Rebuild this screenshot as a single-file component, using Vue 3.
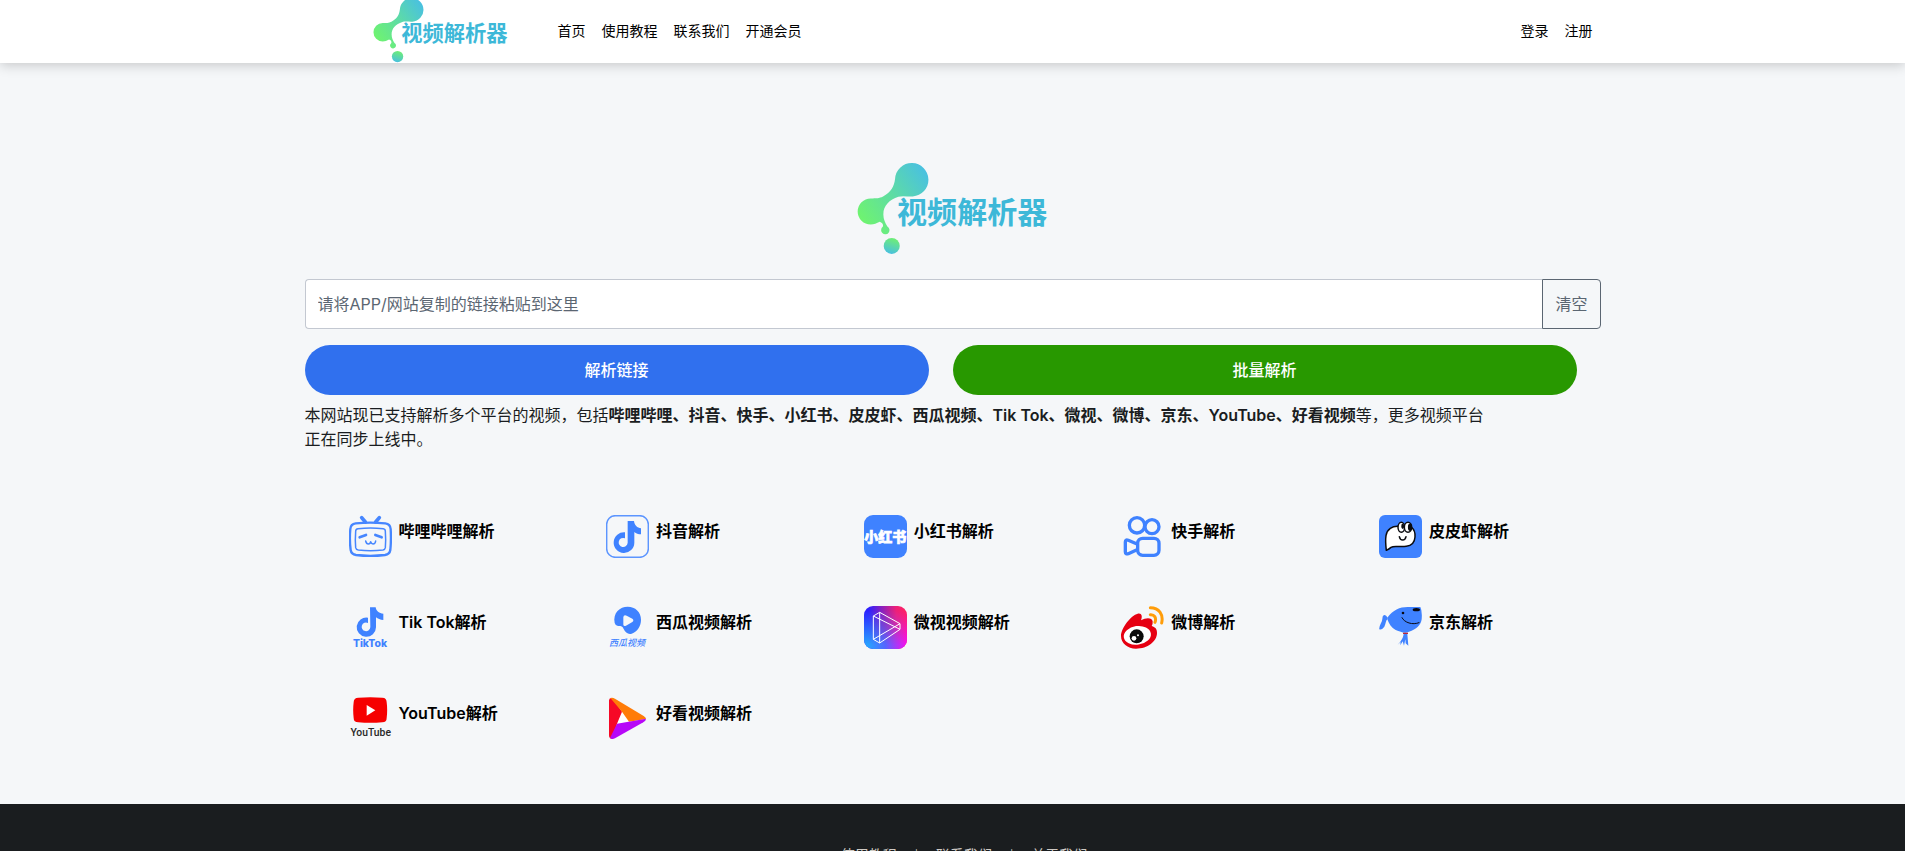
<script setup>
import { ref } from 'vue'

const link = ref('')

const mainNav = ['首页', '使用教程', '联系我们', '开通会员']
const userNav = ['登录', '注册']
const footerNav = ['使用教程', '联系我们', '关于我们']

const platforms = [
  { id: 'bilibili', label: '哔哩哔哩解析' },
  { id: 'douyin', label: '抖音解析' },
  { id: 'xiaohongshu', label: '小红书解析' },
  { id: 'kuaishou', label: '快手解析' },
  { id: 'pipixia', label: '皮皮虾解析' },
  { id: 'tiktok', label: 'Tik Tok解析' },
  { id: 'xigua', label: '西瓜视频解析' },
  { id: 'weishi', label: '微视视频解析' },
  { id: 'weibo', label: '微博解析' },
  { id: 'jd', label: '京东解析' },
  { id: 'youtube', label: 'YouTube解析' },
  { id: 'haokan', label: '好看视频解析' },
]
</script>

<template>
  <div class="page">
    <svg class="defs" width="0" height="0" aria-hidden="true">
      <defs>
        <linearGradient id="blobFill" x1="0" y1="0.8" x2="1" y2="0.1">
          <stop offset="0" stop-color="#70f56c" />
          <stop offset="0.5" stop-color="#5edca4" />
          <stop offset="1" stop-color="#48bfe4" />
        </linearGradient>
        <linearGradient id="ballFill" x1="0.7" y1="0" x2="0.4" y2="1">
          <stop offset="0" stop-color="#70f070" />
          <stop offset="1" stop-color="#48c0e0" />
        </linearGradient>
        <symbol id="brand" viewBox="54 41 572 275">
          <path
            fill="url(#blobFill)"
            d="M168 88 A50 50 0 1 1 221 141 C205 142 192 138 178 142 C150 151 132 170 133 196 C133 209 138 220 145 231 A12.500 12.500 0 1 1 131 232 C134 226 130 220 122 217 C113 222 105 225 95 225 A39 39 0 0 1 95 147 C112 146 120 147 132 141 C156 128 165 112 168 88Z"
          />
          <circle cx="158" cy="289" r="24" fill="url(#ballFill)" />
          <text x="174" y="221" class="brand-text">视频解析器</text>
        </symbol>
      </defs>
    </svg>

    <header class="header">
      <div class="container bar">
        <a href="#" class="brand-link" aria-label="视频解析器">
          <svg class="brand-small"><use href="#brand" /></svg>
        </a>
        <nav class="nav">
          <a v-for="item in mainNav" :key="item" href="#">{{ item }}</a>
        </nav>
        <nav class="nav user">
          <a v-for="item in userNav" :key="item" href="#">{{ item }}</a>
        </nav>
      </div>
    </header>

    <main class="container main">
      <svg class="brand-large" role="img" aria-label="视频解析器"><use href="#brand" /></svg>

      <form @submit.prevent>
        <div class="field">
          <input
            v-model="link"
            type="text"
            aria-label="视频链接"
            placeholder="请将APP/网站复制的链接粘贴到这里"
          />
          <button type="button" class="clear" @click="link = ''">清空</button>
        </div>
        <div class="actions">
          <button type="submit" class="action blue">解析链接</button>
          <button type="button" class="action green">批量解析</button>
        </div>
      </form>

      <p class="intro">
        本网站现已支持解析多个平台的视频，包括<strong>哔哩哔哩、抖音、快手、小红书、皮皮虾、西瓜视频、Tik Tok、微视、微博、京东、YouTube、好看视频</strong>等，更多视频平台正在同步上线中。
      </p>

      <div class="platforms">
        <a v-for="p in platforms" :key="p.id" href="#" class="platform">
          <svg class="icon" viewBox="0 0 129 129" aria-hidden="true">
            <g v-if="p.id === 'bilibili'" fill="none" stroke="#4686ff" stroke-linecap="round" stroke-linejoin="round">
              <path d="M38 8L49 21M91 8L80 21" stroke-width="11" />
              <path d="M20 25Q64 21 109 25Q124 27 125 42Q127 75 124 105Q122 118 108 120Q64 125 21 120Q7 118 5 105Q1 75 4 42Q5 27 20 25Z" stroke-width="7" />
              <path d="M27 41Q64 37 103 41Q109 42 109 49Q111 74 109 98Q108 104 102 105Q64 109 28 105Q21 104 20 98Q18 74 20 49Q20 42 27 41Z" stroke-width="4.500" />
              <path d="M32 67L51 60M79 60L98 67" stroke-width="8" />
              <path d="M50 78Q52 87 58 87Q64 87 65 80Q67 87 72 87Q79 87 80 78" stroke-width="4.500" />
            </g>

            <g v-else-if="p.id === 'douyin'">
              <rect x="2" y="2" width="125" height="125" rx="26" fill="none" stroke="#5c95ff" stroke-width="4.500" />
              <path fill="#3f82ff" d="M65 18H84C85 30 94 39 105 40V58C97 58 90 55 85 51V83A31 31 0 1 1 57 52V70A13.500 13.500 0 1 0 65 83Z" />
            </g>

            <g v-else-if="p.id === 'xiaohongshu'">
              <rect width="129" height="129" rx="27" fill="#3f82ff" />
              <text x="64" y="80" class="xhs">小红书</text>
            </g>

            <g v-else-if="p.id === 'kuaishou'" fill="none" stroke="#3f82ff" stroke-width="10" stroke-linejoin="round">
              <circle cx="48" cy="31" r="23" />
              <circle cx="93" cy="35" r="21" />
              <rect x="50" y="70" width="64" height="51" rx="15" />
              <path d="M48 87L22 76Q13 72 13 81V110Q13 119 22 116L48 104" />
            </g>

            <g v-else-if="p.id === 'pipixia'" stroke="#0b0c10" stroke-width="4.500" stroke-linejoin="round" stroke-linecap="round">
              <rect width="129" height="129" rx="18" fill="#3f82ff" stroke="none" />
              <path fill="#fff" d="M22 106C20 90 19 75 21 62C24 42 40 33 58 34L97 36C106 44 109 55 108 66C107 82 97 92 82 94C60 97 45 91 36 97Q30 102 22 106Z" />
              <ellipse cx="67" cy="37" rx="10" ry="15" fill="#fff" />
              <ellipse cx="87" cy="37" rx="11" ry="15" fill="#fff" />
              <ellipse cx="71" cy="34" rx="2" ry="6" fill="#0b0c10" />
              <ellipse cx="93" cy="37" rx="4" ry="9" fill="#0b0c10" />
              <path fill="none" d="M61 65Q63 75 71 75Q79 75 81 65" />
            </g>

            <g v-else-if="p.id === 'tiktok'" fill="#3f82ff">
              <path d="M63 4H80C81 14 91 23 103 23V42C94 42 86 38 81 34V64A29 29 0 1 1 57 35V51A13 13 0 1 0 64 63Z" />
              <text x="63" y="122" class="tt">TikTok</text>
            </g>

            <g v-else-if="p.id === 'xigua'" fill="#3f82ff">
              <path fill-rule="evenodd" d="M26 51C20 20 42 2 65 2C88 2 105 18 105 41C105 60 95 76 77 83C66 86 58 79 53 69C49 59 43 60 36 60Q28 59 26 51ZM52 34V56Q53 62 60 59L79 48Q85 43 79 38L62 29Q53 25 52 34Z" />
              <text x="63" y="121" class="xg">西瓜视频</text>
            </g>

            <g v-else-if="p.id === 'weishi'">
              <defs>
                <linearGradient id="wsTop" x1="0" x2="1">
                  <stop offset="0.1" stop-color="#2c20ff" />
                  <stop offset="0.75" stop-color="#ee2178" />
                  <stop offset="1" stop-color="#ff2260" />
                </linearGradient>
                <linearGradient id="wsBottom" x1="0" x2="1">
                  <stop offset="0.1" stop-color="#28a2ff" />
                  <stop offset="0.5" stop-color="#5566ff" />
                  <stop offset="1" stop-color="#fa0cf0" />
                </linearGradient>
                <linearGradient id="wsFade" x1="0" y1="0" x2="0" y2="1">
                  <stop offset="0.1" stop-color="#000" />
                  <stop offset="0.9" stop-color="#fff" />
                </linearGradient>
                <mask id="wsMask"><rect width="129" height="129" fill="url(#wsFade)" /></mask>
              </defs>
              <rect width="129" height="129" rx="27" fill="url(#wsTop)" />
              <rect width="129" height="129" rx="27" fill="url(#wsBottom)" mask="url(#wsMask)" />
              <path fill="none" stroke="#fff" stroke-width="3" stroke-linejoin="round" d="M47 19L28 30V100L47 111ZM47 19L108 53V70L47 111M28 30L108 70M28 100L108 53" />
            </g>

            <g v-else-if="p.id === 'weibo'">
              <path fill="#e60012" d="M0 90C0 66 30 28 50 23C62 20 65 30 60 43C75 34 93 34 95 46Q96 53 92 60C104 64 108 70 108 81C108 106 80 128 45 128C20 128 0 112 0 90Z" />
              <ellipse cx="49" cy="88" rx="41" ry="28" fill="#fff" transform="rotate(-8 49 88)" />
              <circle cx="47" cy="91" r="21" fill="#0a0a0a" />
              <circle cx="39" cy="97" r="7" fill="#fff" />
              <circle cx="51" cy="88" r="3" fill="#fff" />
              <path fill="none" stroke="#ff9d0a" stroke-width="9" stroke-linecap="round" d="M88 5C114 5 128 25 122 51M88 26C100 25 107 35 102 49" />
            </g>

            <g v-else-if="p.id === 'jd'">
              <path fill="#3f82ff" d="M25 35C42 12 62 3 86 3L124 3Q130 14 128 40C126 57 112 71 90 77C78 84 66 78 50 72C37 66 30 54 25 40Z" />
              <path fill="#3f82ff" d="M14 28Q20 25 26 35L25 40C20 44 21 53 16 62Q8 73 1 70C-1 60 10 48 10 39Q10 30 14 28Z" />
              <path fill="#3f82ff" d="M74 84H85L88 119L80 112L79 100L75 119L71 106L64 118L65 108L56 116Q72 101 74 84Z" />
              <path stroke="#b8263a" stroke-width="4" d="M72 82H87" />
              <ellipse cx="112" cy="11" rx="11" ry="5" fill="#0a0a14" />
              <circle cx="72" cy="21" r="4" fill="#0a0a14" />
              <path fill="none" stroke="#0a0a14" stroke-width="3" stroke-linecap="round" d="M69 35C76 50 101 58 120 50" />
            </g>

            <g v-else-if="p.id === 'youtube'">
              <path fill="#f60000" d="M28 2Q64 -1 100 2Q113 2 113 16Q116 39 113 63Q113 76 100 76Q64 79 28 76Q14 76 14 63Q11 39 14 16Q14 2 28 2Z" />
              <path fill="#fff" d="M53 24V56L79 40Z" />
              <text x="65" y="118" class="yt">YouTube</text>
            </g>

            <g v-else>
              <path fill="#fff" d="M47 40L30 82L74 75Z" />
              <path fill="#f60826" d="M9 10Q10 1 20 3L48 44L33 80L21 125Q9 127 9 115Z" />
              <path fill="#ff7c08" d="M13 3Q20 1 27 5L113 57Q120 61 120 66L69 74L48 44Z" />
              <path fill="#b708f8" d="M33 80L120 65Q120 71 112 76L27 124Q18 129 12 123Z" />
            </g>
          </svg>
          <span class="label">{{ p.label }}</span>
        </a>
      </div>
    </main>

    <footer class="footer">
      <nav class="footer-nav">
        <template v-for="(item, i) in footerNav" :key="item">
          <span v-if="i > 0" class="sep">|</span>
          <a href="#">{{ item }}</a>
        </template>
      </nav>
    </footer>
  </div>
</template>

<style>
body {
  margin: 0;
  background: #f5f7f9;
}
</style>

<style scoped>
.page {
  font-family: Inter, "Noto Sans CJK SC", sans-serif;
  font-size: 16px;
  line-height: 24px;
  color: #1a1d21;
}

a {
  color: inherit;
  text-decoration: none;
}

button,
input {
  box-sizing: border-box;
  margin: 0;
  font: inherit;
}

.defs {
  position: absolute;
}

.container {
  box-sizing: border-box;
  width: 100%;
  max-width: 1320px;
  margin: 0 auto;
  padding: 0 12px;
}

.header {
  position: relative;
  background: #fff;
  box-shadow: 0 2px 12px rgba(0, 0, 0, 0.2);
}

.bar {
  display: flex;
  align-items: center;
  height: 63px;
  padding: 0 20px 2px 80px;
}

.brand-link {
  display: flex;
}

.brand-small {
  width: 135px;
  height: 65px;
}

.brand-large {
  display: block;
  width: 191px;
  height: 92px;
  margin: 0 auto;
}

.brand-text {
  font-family: "Noto Sans CJK SC", sans-serif;
  font-size: 90px;
  font-weight: 700;
  fill: #3db8d8;
}

.nav {
  display: flex;
  gap: 16px;
  margin-left: 50px;
  font-size: 14px;
  line-height: 20px;
  color: #000;
}

.user {
  margin-left: auto;
}

.main {
  padding-top: 100px;
  padding-bottom: 64px;
}

.field {
  display: flex;
  margin-top: 24px;
}

.field input {
  flex: 1;
  min-width: 0;
  height: 50px;
  padding: 0 12px;
  border: 1px solid #c3c8d1;
  border-right: 0;
  border-radius: 4px 0 0 4px;
  background: #fff;
  color: #1a1d21;
}

.field input::placeholder {
  color: #5b6672;
  opacity: 1;
}

.clear {
  height: 50px;
  padding: 0 12px;
  border: 1px solid #5b6672;
  border-radius: 0 4px 4px 0;
  background: transparent;
  color: #5b6672;
}

.actions {
  display: grid;
  grid-template-columns: 1fr 1fr;
  gap: 24px;
  margin: 16px 24px 0 0;
}

.action {
  height: 50px;
  border: 0;
  border-radius: 25px;
  color: #fff;
  font-weight: 500;
}

.blue {
  background: #3070ee;
}

.green {
  background: #289800;
}

.intro {
  max-width: 1188px;
  margin: 8px 0 0;
}

.intro strong {
  font-weight: 600;
}

.platforms {
  display: grid;
  grid-template-columns: repeat(5, 1fr);
  row-gap: 48px;
  margin: 64px 8px 0 0;
}

.platform {
  display: flex;
  align-items: flex-start;
  gap: 7px;
  padding-left: 44px;
  color: #000;
  font-weight: 600;
}

.icon {
  width: 43px;
  height: 43px;
  flex: none;
}

.label {
  padding-top: 4px;
}

.xhs,
.xg {
  font-family: "Noto Sans CJK SC", sans-serif;
  text-anchor: middle;
}

.xhs {
  font-size: 42px;
  font-weight: 900;
  fill: #fff;
  stroke: #fff;
  stroke-width: 2px;
}

.xg {
  font-size: 27px;
  font-style: italic;
  font-weight: 500;
}

.tt {
  font-size: 31px;
  font-weight: 800;
  text-anchor: middle;
}

.yt {
  font-family: Roboto, "Liberation Sans", sans-serif;
  font-size: 31px;
  font-weight: 500;
  fill: #282828;
  text-anchor: middle;
}

.footer {
  padding: 41px 12px 41px 35px;
  background: #1a1d1f;
  color: #cfcac4;
  font-size: 14px;
  line-height: 20px;
}

.footer-nav {
  display: flex;
  justify-content: center;
  gap: 18px;
}

.sep {
  font-size: 10px;
}
</style>
